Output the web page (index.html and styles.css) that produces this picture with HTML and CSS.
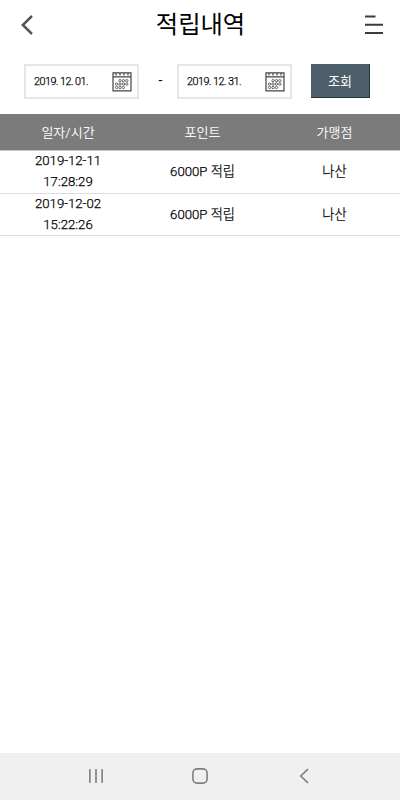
FILE: index.html
```html
<!DOCTYPE html>
<html lang="ko">
<head>
<meta charset="utf-8">
<meta name="viewport" content="width=device-width, initial-scale=1">
<title>적립내역</title>
<link rel="stylesheet" href="styles.css">
</head>
<body>
<svg class="defs" width="0" height="0" aria-hidden="true">
  <symbol id="calendar" viewBox="0 0 20 20">
    <path d="M1 .8H19V18.8H1ZM1 4.8H19" fill="none" stroke="#444" stroke-width="1.2"/>
    <path d="M4 1V3.6M8 1V3.6M12 1V3.6M16 1V3.6" stroke="#555" stroke-width="1.3"/>
    <g fill="none" stroke="#444" stroke-width=".8">
      <circle cx="8" cy="8.7" r="1.2"/><circle cx="11.4" cy="8.7" r="1.2"/><circle cx="14.8" cy="8.7" r="1.2"/>
      <circle cx="4.6" cy="12.1" r="1.2"/><circle cx="8" cy="12.1" r="1.2"/><circle cx="11.4" cy="12.1" r="1.2"/><circle cx="14.8" cy="12.1" r="1.2"/>
      <circle cx="4.6" cy="15.5" r="1.2"/><circle cx="8" cy="15.5" r="1.2"/><circle cx="11.4" cy="15.5" r="1.2"/>
    </g>
  </symbol>
</svg>
<div class="screen">
  <header class="topbar">
    <svg class="back" width="14" height="22" viewBox="0 0 14 22"><path d="M12 2 2.8 11 12 20" fill="none" stroke="#555" stroke-width="2.5"/></svg>
    <h1 class="title">적립내역</h1>
    <svg class="menu" width="20" height="20" viewBox="0 0 20 20"><path d="M1 1.5H11.5M1 9.8H19M1 18H19" stroke="#3d3b3d" stroke-width="2"/></svg>
  </header>
  <form class="filter">
    <div class="date"><span>2019. 12. 01.</span><svg width="20" height="20"><use href="#calendar"/></svg></div>
    <span class="dash">-</span>
    <div class="date"><span>2019. 12. 31.</span><svg width="20" height="20"><use href="#calendar"/></svg></div>
    <button class="search" type="button">조회</button>
  </form>
  <main class="list">
    <div class="row head"><span>일자/시간</span><span>포인트</span><span>가맹점</span></div>
    <div class="row"><span class="time">2019-12-11<br>17:28:29</span><span class="thin">6000P 적립</span><span class="thin">나산</span></div>
    <div class="row"><span class="time">2019-12-02<br>15:22:26</span><span class="thin">6000P 적립</span><span class="thin">나산</span></div>
  </main>
  <nav class="navbar">
    <svg width="16" height="16" viewBox="0 0 16 16"><path d="M1.9 1V15M8 1V15M14.1 1V15" stroke="#808080" stroke-width="1.6"/></svg>
    <svg width="16" height="16" viewBox="0 0 16 16"><rect x=".9" y=".9" width="14.2" height="14.2" rx="4" fill="none" stroke="#808080" stroke-width="1.6"/></svg>
    <svg width="16" height="16" viewBox="0 0 16 16"><path d="M12 1.2 4.8 8 12 14.8" fill="none" stroke="#808080" stroke-width="1.6"/></svg>
  </nav>
</div>
</body>
</html>
```
FILE: styles.css
```css
* { box-sizing: border-box; }
body { margin: 0; background: #fff; color: #000; font-family: Roboto, "Noto Sans CJK KR", sans-serif; }
.defs { display: none; }
.screen { display: flex; flex-direction: column; height: 800px; width: 400px; }
.topbar { display: flex; align-items: center; justify-content: space-between; height: 50px; padding: 0 16px 0 20px; }
.title { margin: 0 0 1px 3px; font-size: 24.3px; font-weight: 400; line-height: 36px; color: #000; }
.filter { display: flex; height: 64px; padding: 14px 0 0 24px; }
.date { display: flex; align-items: center; justify-content: space-between; width: 115px; height: 35px; padding: 0 5px 0 8px; border: 2px solid #e6e6e6; font-size: 10.8px; font-weight: 300; letter-spacing: -.53px; -webkit-text-stroke: .25px #000; }
.dash { width: 38px; padding-left: 5px; text-align: center; line-height: 33px; font-size: 14px; }
.search { width: 59px; height: 34px; margin: 0 0 0 19px; padding: 0; border: 0; border-right: 1px solid #26323a; border-bottom: 1px solid #26323a; background: #4c5f6b; color: #fff; font: inherit; font-size: 13px; }
.list { flex: 1; }
.row { display: grid; grid-template-columns: 136px 133px 131px; align-items: center; height: 42.5px; padding-bottom: 2px; border-bottom: 1px solid #dedede; font-size: 13px; line-height: 21px; text-align: center; }
.time, .thin { font-size: 13.2px; font-weight: 300; -webkit-text-stroke: .25px #000; }
.time { margin-top: -1px; }
.head { height: 37px; padding-bottom: 0; background: #7b7b7b; border-color: #c4c4c4; color: #f6f6f6; }
.navbar { display: flex; justify-content: center; align-items: center; gap: 88px; height: 47px; padding-bottom: 2px; background: #f0f0f0; }
```
